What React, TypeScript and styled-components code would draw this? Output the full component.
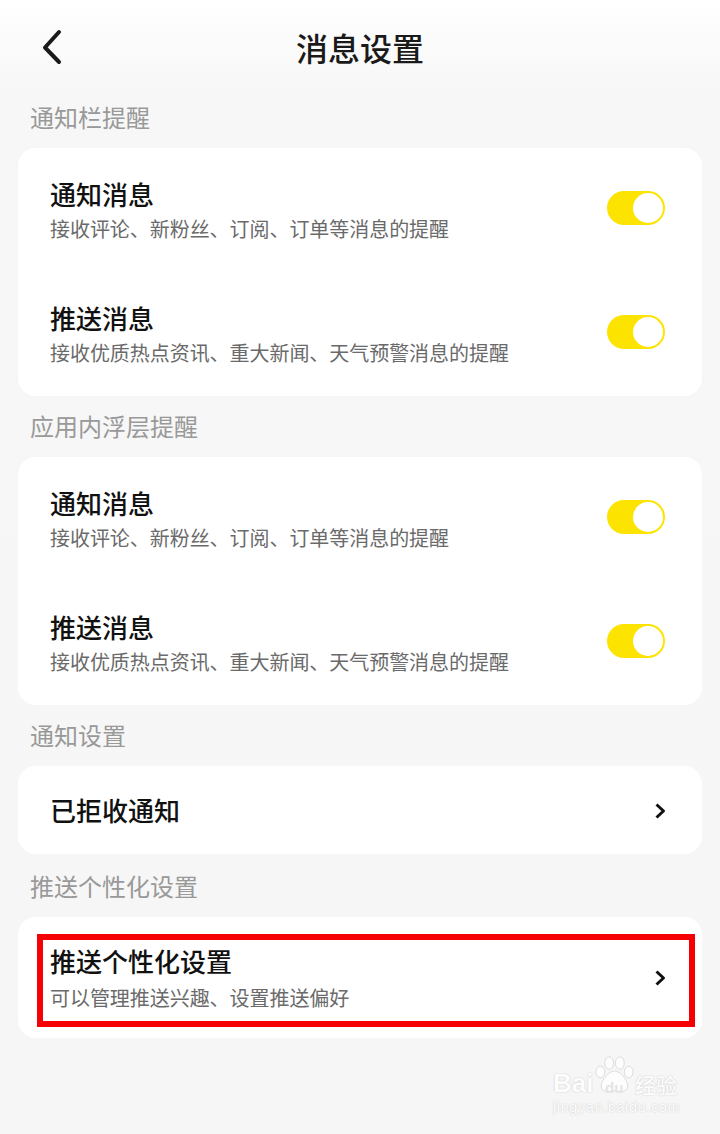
import * as React from 'react';
import styled, { createGlobalStyle } from 'styled-components';

const GlobalStyle = createGlobalStyle`
	html, body {
		margin: 0;
		padding: 0;
		background: #f6f6f6;
	}
`;

const Page = styled.div`
	position: relative;
	width: 720px;
	height: 1134px;
	overflow: hidden;
	background: linear-gradient(#ffffff 0, #f7f7f7 90px, #f6f6f6 100%);
	font-family: "Noto Sans CJK SC", "Noto Sans", sans-serif;
`;

const Header = styled.div`
	position: relative;
	height: 96px;
	display: flex;
	align-items: center;
	justify-content: center;
	h1 {
		margin: 0 0 2px;
		font-size: 32px;
		line-height: 1;
		font-weight: 500;
		color: #1a1a1a;
	}
`;

const BackIcon = styled.svg`
	position: absolute;
	left: 40px;
	top: 28px;
	width: 24px;
	height: 38px;
`;

const SectionLabel = styled.div`
	height: 52px;
	padding-left: 30px;
	font-size: 24px;
	line-height: 42px;
	color: #999999;
`;

const Card = styled.div<{ $gap?: number }>`
	margin: 0 18px ${props => props.$gap ?? 9}px;
	background: #ffffff;
	border-radius: 18px;
	box-sizing: border-box;
`;

const ToggleCard = styled(Card)`
	height: 248px;
`;

const Row = styled.div<{ $height: number }>`
	height: ${props => props.$height}px;
	box-sizing: border-box;
	padding: 0 37px 0 33px;
	display: flex;
	align-items: center;
	justify-content: space-between;
`;

const RowText = styled.div`
	margin-left: -1px;
`;

const RowTitle = styled.div`
	font-size: 26px;
	line-height: 34px;
	font-weight: 500;
	color: #111111;
`;

const RowSub = styled.div<{ $gap?: number }>`
	margin-top: ${props => props.$gap ?? 4}px;
	font-size: 20px;
	line-height: 28px;
	letter-spacing: -0.05px;
	color: #6a6a6a;
`;

const Switch = styled.div`
	width: 58px;
	height: 34px;
	margin-top: -4px;
	box-sizing: border-box;
	border-radius: 17px;
	background: #fde300;
	padding: 2px;
	display: flex;
	justify-content: flex-end;
	i {
		display: block;
		width: 30px;
		height: 30px;
		border-radius: 50%;
		background: #ffffff;
	}
`;

const Chevron = styled.svg`
	width: 12px;
	height: 18px;
	margin: 1px -1px 0 0;
`;

const Highlight = styled.div`
	position: absolute;
	left: 37px;
	top: 934px;
	width: 658px;
	height: 93px;
	box-sizing: border-box;
	border: 6px solid #f50005;
	pointer-events: none;
`;

const Watermark = styled.div`
	position: absolute;
	left: 553px;
	top: 1056px;
	width: 130px;
	color: #fdfdfd;
	font-family: "Liberation Sans", sans-serif;
	text-shadow: 0 0 1.5px #bdbdbd;
	svg {
		position: absolute;
		left: 42px;
		top: 0;
		width: 39px;
		height: 39px;
	}
`;

const MarkLogo = styled.div`
	display: flex;
	align-items: flex-end;
	height: 42px;
	span {
		display: block;
	}
`;

const MarkBrand = styled.span`
	width: 82px;
	font-size: 26px;
	line-height: 30px;
	font-weight: 700;
`;

const MarkDu = styled.span`
	position: absolute;
	left: 52px;
	top: 24px;
	font-size: 15px;
	line-height: 16px;
	font-weight: 700;
	color: #e4e4e4;
	text-shadow: none;
`;

const MarkCn = styled.span`
	font-family: "Noto Sans CJK SC", sans-serif;
	font-size: 21px;
	line-height: 28px;
	font-weight: 500;
	white-space: nowrap;
`;

const MarkUrl = styled.div`
	margin-top: 1px;
	font-size: 14.5px;
	line-height: 16px;
	letter-spacing: 0.6px;
	white-space: nowrap;
`;

const Back = () => (
	<BackIcon viewBox="0 0 24 38">
		<path d="M19 4 L5 19.5 L19 34" fill="none" stroke="#1a1a1a" strokeWidth="4" strokeLinecap="round" strokeLinejoin="round" />
	</BackIcon>
);

const Arrow = () => (
	<Chevron viewBox="0 0 12 18">
		<path d="M2.5 2.5 L9.5 9 L2.5 15.5" fill="none" stroke="#111" strokeWidth="3" strokeLinejoin="round" />
	</Chevron>
);

const ToggleRow = ({ title, sub }: { title: string; sub: string }) => (
	<Row $height={124}>
		<RowText>
			<RowTitle>{title}</RowTitle>
			<RowSub>{sub}</RowSub>
		</RowText>
		<Switch><i /></Switch>
	</Row>
);

const toggleRows = [
	{ title: '通知消息', sub: '接收评论、新粉丝、订阅、订单等消息的提醒' },
	{ title: '推送消息', sub: '接收优质热点资讯、重大新闻、天气预警消息的提醒' },
];

const App = () => (
	<Page>
		<GlobalStyle />
		<Header>
			<Back />
			<h1>消息设置</h1>
		</Header>
		<SectionLabel>通知栏提醒</SectionLabel>
		<ToggleCard>
			{toggleRows.map(r => <ToggleRow key={r.title} {...r} />)}
		</ToggleCard>
		<SectionLabel>应用内浮层提醒</SectionLabel>
		<ToggleCard>
			{toggleRows.map(r => <ToggleRow key={r.title} {...r} />)}
		</ToggleCard>
		<SectionLabel>通知设置</SectionLabel>
		<Card $gap={11}>
			<Row $height={88}>
				<RowText>
					<RowTitle>已拒收通知</RowTitle>
				</RowText>
				<Arrow />
			</Row>
		</Card>
		<SectionLabel>推送个性化设置</SectionLabel>
		<Card>
			<Row $height={121}>
				<RowText>
					<RowTitle>推送个性化设置</RowTitle>
					<RowSub $gap={6}>可以管理推送兴趣、设置推送偏好</RowSub>
				</RowText>
				<Arrow />
			</Row>
		</Card>
		<Highlight />
		<Watermark>
			<svg viewBox="0 0 44 42">
				<g fill="#fdfdfd" stroke="#d4d4d4" strokeWidth="0.9">
					<ellipse cx="6" cy="17" rx="5" ry="6.5" />
					<ellipse cx="16" cy="7" rx="5" ry="7" />
					<ellipse cx="28" cy="7" rx="5" ry="7" />
					<ellipse cx="38" cy="17" rx="5" ry="6.5" />
					<path d="M22 16 C29 16 37 27 37 33 C37 40 28 40 22 38 C16 40 7 40 7 33 C7 27 15 16 22 16 Z" />
				</g>
			</svg>
			<MarkLogo>
				<MarkBrand>Bai</MarkBrand>
				<MarkDu>du</MarkDu>
				<MarkCn>经验</MarkCn>
			</MarkLogo>
			<MarkUrl>jingyan.baidu.com</MarkUrl>
		</Watermark>
	</Page>
);

export default App;
